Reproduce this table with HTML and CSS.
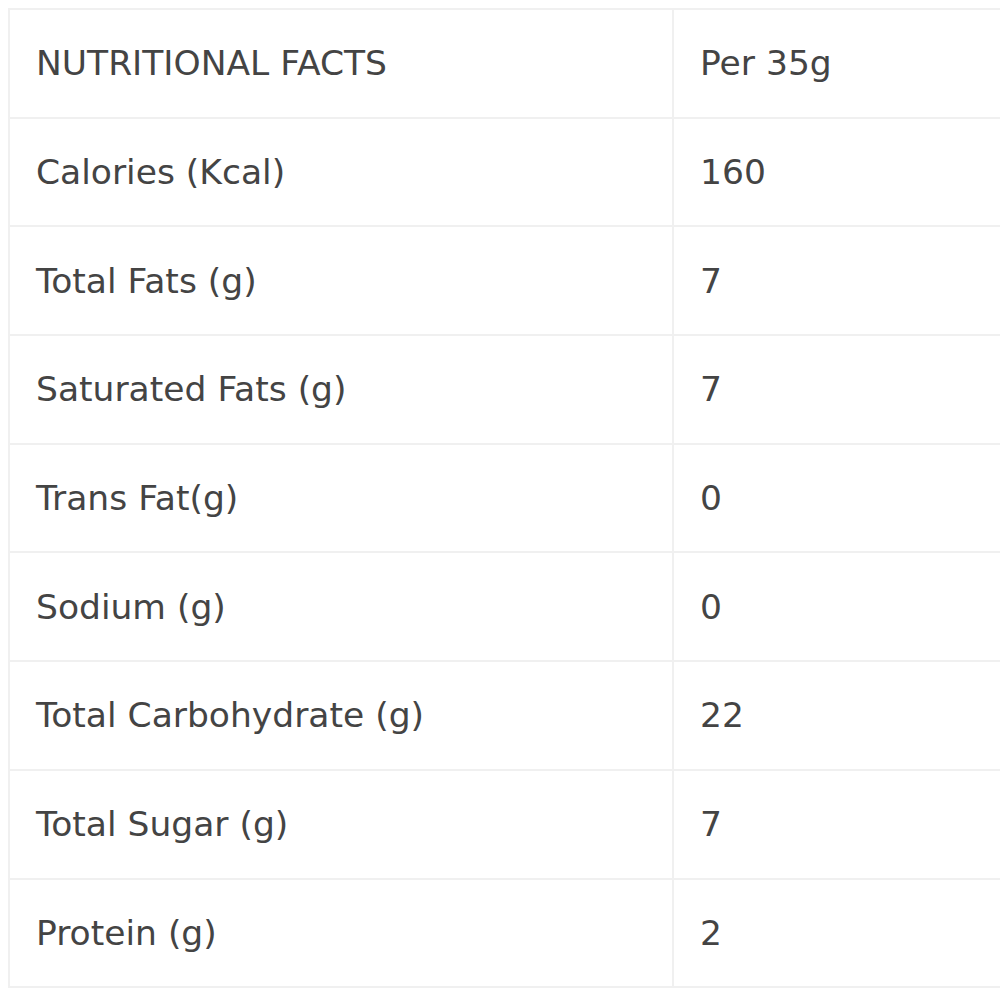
FILE: index.html
```html
<!DOCTYPE html>
<html>
<head>
<meta charset="utf-8">
<link rel="stylesheet" href="styles.css">
</head>
<body>
<table class="facts">
  <tbody>
    <tr><td class="label">NUTRITIONAL FACTS</td><td class="value">Per 35g</td></tr>
    <tr><td class="label">Calories (Kcal)</td><td class="value">160</td></tr>
    <tr><td class="label">Total Fats (g)</td><td class="value">7</td></tr>
    <tr><td class="label">Saturated Fats (g)</td><td class="value">7</td></tr>
    <tr><td class="label">Trans Fat(g)</td><td class="value">0</td></tr>
    <tr><td class="label">Sodium (g)</td><td class="value">0</td></tr>
    <tr><td class="label">Total Carbohydrate (g)</td><td class="value">22</td></tr>
    <tr><td class="label">Total Sugar (g)</td><td class="value">7</td></tr>
    <tr><td class="label">Protein (g)</td><td class="value">2</td></tr>
  </tbody>
</table>
</body>
</html>
```
FILE: styles.css
```css
html, body {
  margin: 0;
  padding: 0;
  background: #ffffff;
  overflow: hidden;
}
body {
  padding: 8px 0 0 8px;
  font-family: "DejaVu Sans", "Liberation Sans", sans-serif;
  color: #444444;
}
.facts {
  border-collapse: collapse;
  width: 1330px;
  table-layout: fixed;
}
.facts td {
  border: 2px solid #f0f0f0;
  height: 106.7px;
  padding: 0 26px;
  font-size: 34.5px;
  vertical-align: middle;
  white-space: nowrap;
}
.facts .label {
  width: 610px;
}
```
